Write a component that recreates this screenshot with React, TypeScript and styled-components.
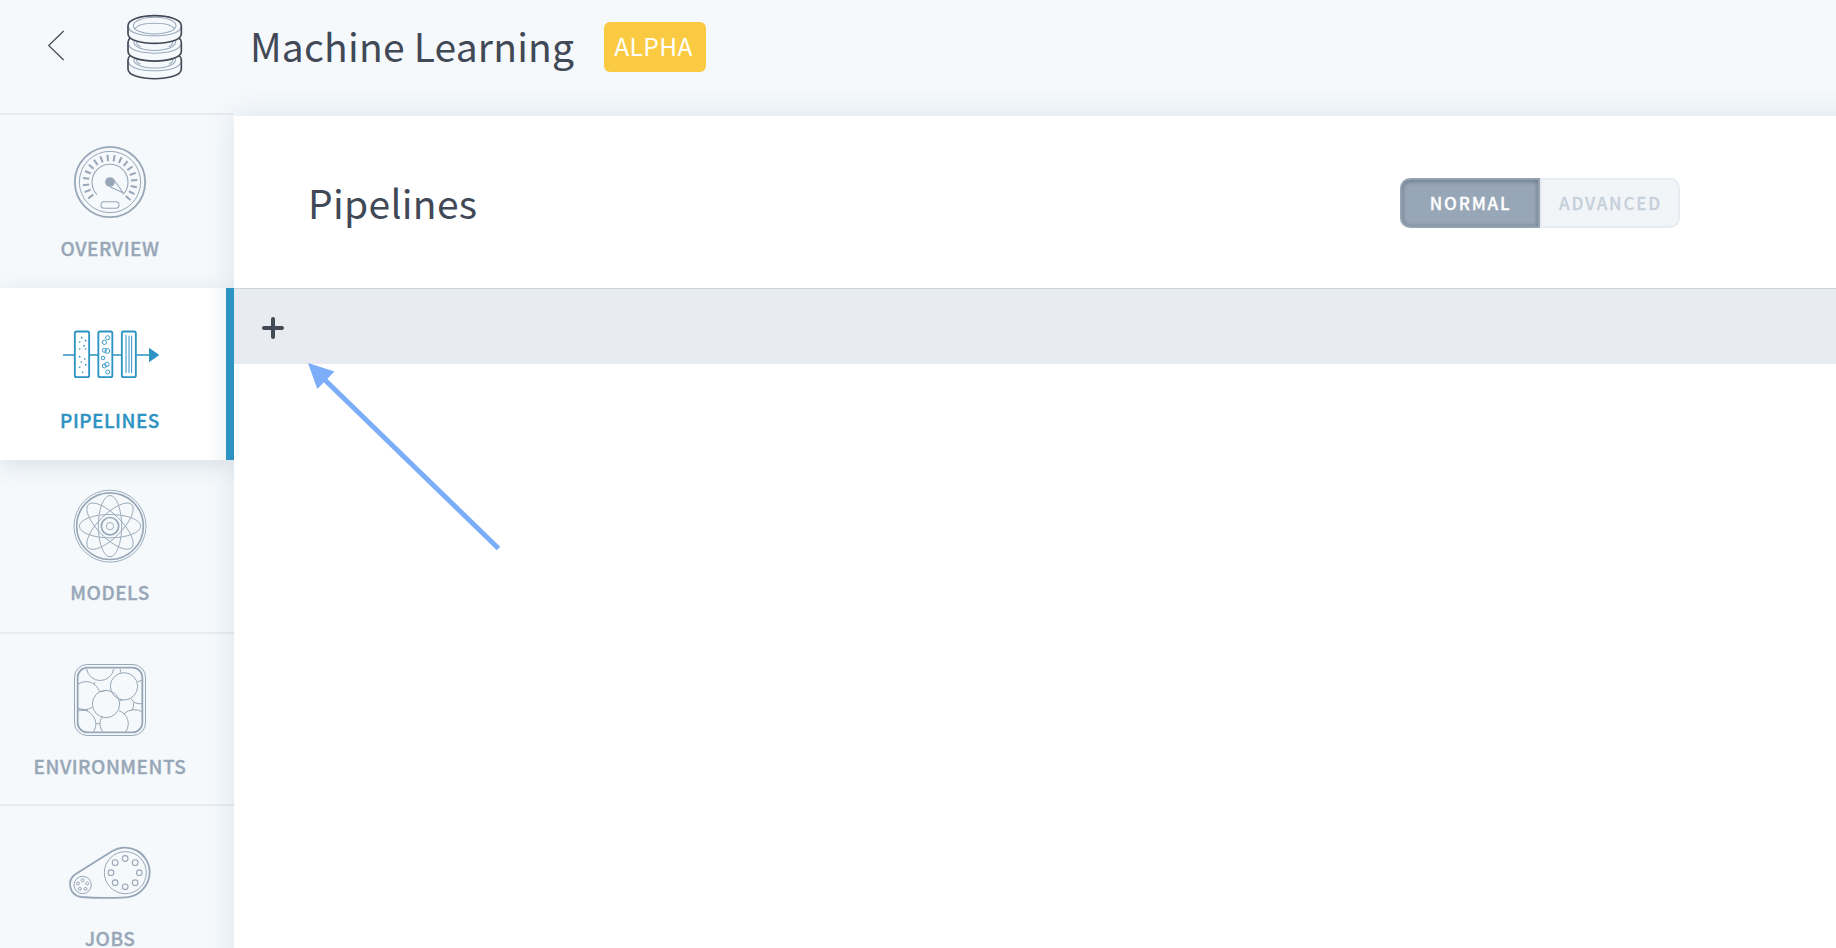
import React from 'react';
import styled, { createGlobalStyle, css } from 'styled-components';

const color = {
  page: '#f5f9fc',
  line: '#e8ecf0',
  ink: '#414856',
  slate: '#98a7b7',
  blue: '#2c93c3',
  amber: '#facb42',
  arrow: '#7badf8',
};

const GlobalStyle = createGlobalStyle`
  * { box-sizing: border-box; }
  body {
    margin: 0;
    overflow: hidden;
    background: ${color.page};
    color: ${color.ink};
    font-family: "Noto Sans CJK SC", "Noto Sans", sans-serif;
  }
`;

const Screen = styled.div`
  display: flex;
  flex-direction: column;
  width: 100%;
  height: 948px;
  overflow: hidden;
  position: relative;
`;

const Header = styled.header`
  display: flex;
  align-items: flex-start;
  flex: none;
  height: 116px;
  padding: 0 0 0 46px;
  background: linear-gradient(${color.line}, ${color.line}) left 0 bottom 1px / 234px 2px no-repeat;
`;

const BackIcon = styled.svg`
  width: 20px;
  height: 32px;
  margin-top: 30px;
  flex: none;
`;

const DatabaseIcon = styled.svg`
  width: 56px;
  height: 66px;
  margin: 14px 0 0 61px;
  flex: none;
`;

const ProductName = styled.h1`
  width: 354px;
  margin: 17px 0 0 67px;
  font-size: 39px;
  font-weight: 400;
  line-height: 57px;
  letter-spacing: 0.2px;
  white-space: nowrap;
`;

const Badge = styled.span`
  display: flex;
  justify-content: center;
  width: 102px;
  height: 50px;
  margin-top: 22px;
  border-radius: 6px;
  background: ${color.amber};
  color: #fff;
  font-size: 24.5px;
  font-weight: 400;
  line-height: 48px;
  letter-spacing: 0.4px;
  padding-right: 3px;
`;

const Body = styled.div`
  display: flex;
  flex: 1;
  min-height: 0;
`;

const Sidebar = styled.nav`
  display: flex;
  flex-direction: column;
  flex: none;
  width: 234px;
`;

const NavItem = styled.a<{ $active?: boolean; $divided?: boolean; $height?: number }>`
  display: flex;
  flex-direction: column;
  align-items: center;
  flex: none;
  height: ${(p) => p.$height ?? 172}px;
  padding: 30px 14px 0 0;
  color: ${color.slate};
  ${(p) => p.$divided && css`border-bottom: 2px solid ${color.line};`}
  ${(p) =>
    p.$active &&
    css`
      padding-right: 6px;
      border-right: 8px solid ${color.blue};
      background: linear-gradient(to left, #f3f6f8 0, #fff 20px);
      color: ${color.blue};
      box-shadow: 0 5px 22px rgba(65, 85, 110, 0.15);
      position: relative;
      z-index: 2;
      clip-path: inset(-40px 0 -40px 0);
    `}
`;

const NavIcon = styled.svg<{ $width?: number }>`
  width: ${(p) => p.$width ?? 72}px;
  height: 72px;
  flex: none;
  overflow: visible;
  fill: none;
  stroke: currentColor;
  stroke-width: 3.2;
`;

const NavLabel = styled.span`
  margin-top: 20px;
  font-size: 19px;
  font-weight: 500;
  line-height: 20px;
  letter-spacing: 0.5px;
  white-space: nowrap;
  -webkit-text-stroke: 0.35px currentColor;
`;

const Main = styled.main`
  flex: 1;
  margin: 0 -40px -40px 0;
  background: #fff;
  box-shadow: 0 0 28px rgba(65, 85, 110, 0.13);
  position: relative;
  z-index: 1;
`;

const TitleBar = styled.div`
  display: flex;
  align-items: center;
  justify-content: space-between;
  height: 172px;
  padding: 2px 196px 0 74px;
`;

const Title = styled.h2`
  margin: 0;
  padding-bottom: 3px;
  font-size: 39px;
  font-weight: 400;
  line-height: 56px;
  letter-spacing: 0.3px;
`;

const Toggle = styled.div`
  display: flex;
  width: 280px;
  height: 50px;
`;

const ToggleOption = styled.button<{ $on?: boolean }>`
  flex: 0 0 140px;
  padding: 0;
  border: 2px solid #e8ebf1;
  border-radius: 0 10px 10px 0;
  background: #f2f5f8;
  color: #c5d0da;
  font: 500 17px/46px "Noto Sans CJK SC", sans-serif;
  letter-spacing: 1.85px;
  text-indent: 1px;
  -webkit-text-stroke: 0.3px currentColor;
  ${(p) =>
    p.$on &&
    css`
      border: 2px solid #94a3b2;
      border-radius: 10px 0 0 10px;
      background: ${color.slate};
      color: #fff;
      box-shadow: inset 0 1px 5px rgba(55, 65, 80, 0.55);
    `}
`;

const Toolbar = styled.div`
  display: flex;
  align-items: center;
  height: 76px;
  padding: 2px 28px 0;
  border-top: 1px solid #c9d3de;
  background: #e8ebf0;
`;

const PlusIcon = styled.svg`
  width: 22px;
  height: 22px;
`;

const Pointer = styled.svg`
  position: absolute;
  left: 300px;
  top: 356px;
  width: 206px;
  height: 200px;
  z-index: 3;
`;

const polar = (cx: number, cy: number, r: number, deg: number) => {
  const a = (deg * Math.PI) / 180;
  return [cx + r * Math.cos(a), cy + r * Math.sin(a)];
};

function GaugeIcon() {
  return (
    <NavIcon viewBox="222 108 216 216">
      <circle cx="330" cy="216" r="105.500" strokeWidth="5.500" />
      <circle cx="330" cy="216" r="92" strokeWidth="3" />
      <path d="M291 254A54 54 0 1 1 369 254" />
      {Array.from({ length: 18 }, (_, i) => {
        const deg = 143 + i * 15.2;
        const [x1, y1] = polar(330, 216, 63, deg);
        const [x2, y2] = polar(330, 216, 82, deg);
        return <line key={i} x1={x1} y1={y1} x2={x2} y2={y2} strokeWidth="6" />;
      })}
      <path d="M330 230L370 249L342 210" />
      <circle cx="330" cy="216" r="14.5" fill="currentColor" stroke="none" />
      <rect x="303" y="275" width="54" height="20" rx="10" />
    </NavIcon>
  );
}

function PipelineIcon() {
  const dots = [[245, 173], [257, 182], [239, 186], [252, 197], [239, 207], [257, 207], [239, 230], [254, 237], [244, 246], [257, 254], [239, 262], [248, 277]];
  const rings = [[323, 173, 6], [313, 187, 6.5], [313, 211, 6], [322, 213, 7], [309, 234, 5.5], [321, 253, 6.5], [313, 258, 6], [323, 276, 6]];
  return (
    <NavIcon viewBox="180 114 300 216" $width={100}>
      <path d="M189 225H223M269 225H294M338 225H364M410 225H448" strokeWidth="5" />
      <rect x="224.500" y="154.500" width="43" height="137" rx="5" strokeWidth="5.500" />
      <rect x="295" y="154.500" width="42" height="137" rx="5" strokeWidth="5.500" />
      <rect x="365.500" y="154.500" width="42" height="137" rx="5" strokeWidth="5.500" />
      {dots.map(([x, y]) => <circle key={`${x}-${y}`} cx={x} cy={y} r="2.5" fill="currentColor" stroke="none" />)}
      {rings.map(([x, y, r]) => <circle key={`${x}-${y}`} cx={x} cy={y} r={r} strokeWidth="2.800" />)}
      <path d="M378 165V279M387 167V279M395 167V279" strokeWidth="3" />
      <path d="M447 203L478 225L447 247Z" fill="currentColor" stroke="none" />
    </NavIcon>
  );
}

function AtomIcon() {
  return (
    <NavIcon viewBox="222 90 216 216">
      <circle cx="330" cy="198.500" r="108" strokeWidth="2.800" />
      <circle cx="330" cy="198.500" r="100" strokeWidth="5" />
      {[0, 45, 90, 135].map((a) => (
        <ellipse key={a} cx="330" cy="198.500" rx="92" ry="35" strokeWidth="2.800" transform={`rotate(${a} 330 198.500)`} />
      ))}
      <circle cx="330" cy="198.500" r="26" strokeWidth="5" />
      <circle cx="330" cy="198.500" r="11" strokeWidth="2.800" />
    </NavIcon>
  );
}

function BubblesIcon() {
  return (
    <NavIcon viewBox="222 102 216 216">
      <rect x="223.500" y="103.500" width="213" height="213" rx="38" strokeWidth="3" />
      <rect x="233" y="113" width="194" height="194" rx="29" strokeWidth="5.500" />
      <g strokeWidth="3">
        <circle cx="372" cy="169" r="41" />
        <circle cx="318" cy="222" r="41" />
        <path d="M260 117A41 41 0 0 0 341 117" />
        <path d="M234 163A41 41 0 0 1 298 185" />
        <path d="M234 234A46 46 0 0 0 277 232" />
        <path d="M234 241A43 43 0 0 1 281 305" />
        <path d="M308 305A41 41 0 0 1 307 259M357 242A41 41 0 0 1 377 305" />
        <path d="M281 163L285 156M298 185Q308 185 318 181M361 117V128M413 155L427 151M393 206L402 217A41 41 0 0 0 427 221M359 212Q363 211 367 210M401 217Q402 234 394 243M371 252A46 46 0 0 1 429 247M289 281H300M234 241H264" />
      </g>
    </NavIcon>
  );
}

function BeltIcon() {
  return (
    <NavIcon viewBox="204 138 252 216" $width={84}>
      <path d="M226 253L336 184A74 74 0 0 1 449 246C449 287 416 321 378 322Q310 326 244 321C209 317 198 272 226 253Z" strokeWidth="5.500" />
      <circle cx="376" cy="248" r="63" strokeWidth="3" />
      <circle cx="248" cy="285" r="26" strokeWidth="3" />
      {Array.from({ length: 8 }, (_, i) => {
        const [x, y] = polar(375.5, 248, 42.5, i * 45);
        return <circle key={i} cx={x} cy={y} r="8.500" strokeWidth="3.300" />;
      })}
      {Array.from({ length: 5 }, (_, i) => {
        const [x, y] = polar(248, 285, 14.5, i * 72 - 90);
        return <circle key={i} cx={x} cy={y} r="4.500" strokeWidth="3" />;
      })}
    </NavIcon>
  );
}

const items = [
  { label: 'OVERVIEW', Icon: GaugeIcon },
  { label: 'PIPELINES', Icon: PipelineIcon, active: true },
  { label: 'MODELS', Icon: AtomIcon, divided: true, height: 174 },
  { label: 'ENVIRONMENTS', Icon: BubblesIcon, divided: true },
  { label: 'JOBS', Icon: BeltIcon, height: 142 },
];

export default function App() {
  return (
    <Screen>
      <GlobalStyle />
      <Header>
        <BackIcon viewBox="138 90 60 96" fill="none" stroke={color.ink} strokeWidth="3.500">
          <path d="M191 93L146 136.500L191 180" />
        </BackIcon>
        <DatabaseIcon viewBox="381 42 168 198" fill="none" stroke={color.ink} strokeWidth="5">
          <g stroke="#98a9bb" strokeWidth="3.200">
            <ellipse cx="464" cy="77" rx="64" ry="25" />
            <path d="M404 87C418 64 510 64 524 87" />
            <path d="M386 82C390 116 538 116 542 82" />
            <path d="M386 134C392 168 536 168 542 134M402 122C392 161 536 161 526 122M410 126C410 133 416 138 422 140M518 126C518 133 512 138 506 140" />
            <path d="M386 187C392 221 536 221 542 187M402 175C392 214 536 214 526 175M410 179C410 186 416 191 422 193M518 179C518 186 512 191 506 193" />
          </g>
          <path d="M384 77C384 37 544 37 544 77V101C544 140 384 140 384 101Z" />
          <path d="M391 114Q384 119 384 127V154C384 193 544 193 544 154V127Q544 119 537 114" />
          <path d="M391 167Q384 172 384 180V207C384 246 544 246 544 207V180Q544 172 537 167" />
        </DatabaseIcon>
        <ProductName>Machine Learning</ProductName>
        <Badge>ALPHA</Badge>
      </Header>
      <Body>
        <Sidebar>
          {items.map(({ label, Icon, active, divided, height }) => (
            <NavItem key={label} $active={active} $divided={divided} $height={height}>
              <Icon />
              <NavLabel>{label}</NavLabel>
            </NavItem>
          ))}
        </Sidebar>
        <Main>
          <TitleBar>
            <Title>Pipelines</Title>
            <Toggle>
              <ToggleOption $on>NORMAL</ToggleOption>
              <ToggleOption>ADVANCED</ToggleOption>
            </Toggle>
          </TitleBar>
          <Toolbar>
            <PlusIcon viewBox="0 0 22 22" stroke={color.ink} strokeWidth="4" strokeLinecap="round">
              <path d="M11 2V20M2 11H20" />
            </PlusIcon>
          </Toolbar>
        </Main>
      </Body>
      <Pointer viewBox="300 356 206 200">
        <path d="M325 380L498.500 548.500" stroke={color.arrow} strokeWidth="5" />
        <path d="M308 363L334.500 371.500L317.300 389Z" fill={color.arrow} />
      </Pointer>
    </Screen>
  );
}
